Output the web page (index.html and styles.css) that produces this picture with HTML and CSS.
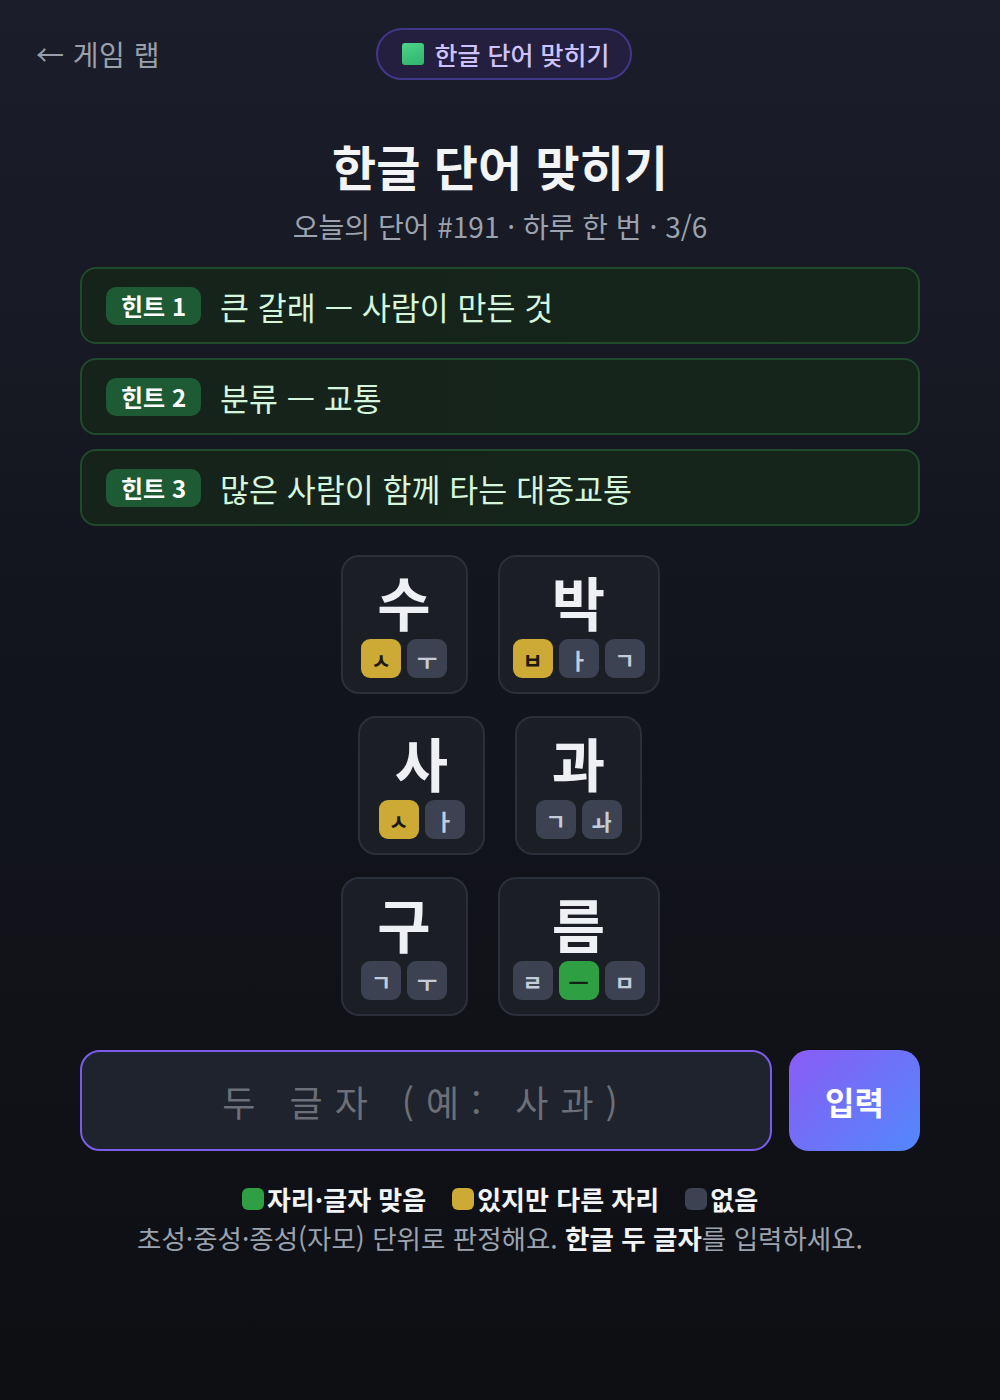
FILE: index.html
```html
<!DOCTYPE html>
<html lang="ko">
<head>
<meta charset="utf-8">
<title>한글 단어 맞히기</title>
<link rel="stylesheet" href="styles.css">
</head>
<body>
<div class="page">
  <header class="topbar">
    <a class="back" href="#">← 게임 랩</a>
    <div class="badge"><span class="sq"></span>한글 단어 맞히기</div>
    <span class="spacer"></span>
  </header>

  <h1 class="title">한글 단어 맞히기</h1>
  <p class="sub">오늘의 단어 #191 · 하루 한 번 · 3/6</p>

  <section class="hints">
    <div class="hint"><span class="tag">힌트 1</span><span class="htext">큰 갈래 — 사람이 만든 것</span></div>
    <div class="hint"><span class="tag">힌트 2</span><span class="htext">분류 — 교통</span></div>
    <div class="hint"><span class="tag">힌트 3</span><span class="htext">많은 사람이 함께 타는 대중교통</span></div>
  </section>

  <section class="board">
    <div class="row">
      <div class="tile"><div class="ch">수</div><div class="jamo"><span class="j y">ㅅ</span><span class="j g">ㅜ</span></div></div>
      <div class="tile"><div class="ch">박</div><div class="jamo"><span class="j y">ㅂ</span><span class="j g">ㅏ</span><span class="j g">ㄱ</span></div></div>
    </div>
    <div class="row">
      <div class="tile"><div class="ch">사</div><div class="jamo"><span class="j y">ㅅ</span><span class="j g">ㅏ</span></div></div>
      <div class="tile"><div class="ch">과</div><div class="jamo"><span class="j g">ㄱ</span><span class="j g">ㅘ</span></div></div>
    </div>
    <div class="row">
      <div class="tile"><div class="ch">구</div><div class="jamo"><span class="j g">ㄱ</span><span class="j g">ㅜ</span></div></div>
      <div class="tile"><div class="ch">름</div><div class="jamo"><span class="j g">ㄹ</span><span class="j gr">ㅡ</span><span class="j g">ㅁ</span></div></div>
    </div>
  </section>

  <form class="entry" onsubmit="return false">
    <input class="field" type="text" placeholder="두 글자 (예: 사과)">
    <button class="go" type="submit">입력</button>
  </form>

  <div class="legend">
    <span class="lg"><span class="dot dgr"></span>자리·글자 맞음</span>
    <span class="lg"><span class="dot dy"></span>있지만 다른 자리</span>
    <span class="lg"><span class="dot dg"></span>없음</span>
  </div>
  <p class="note">초성·중성·종성(자모) 단위로 판정해요. <b>한글 두 글자</b>를 입력하세요.</p>
</div>
</body>
</html>
```

FILE: styles.css
```css
* { box-sizing: border-box; }
html, body { margin: 0; padding: 0; }
body {
  min-height: 1400px;
  background: linear-gradient(180deg, #1b1d2b 0%, #13151d 45%, #0e0f13 100%);
  color: #e5e7eb;
  font-family: "Noto Sans CJK KR", "Noto Sans", sans-serif;
}
.page {
  width: 840px;
  margin: 0 auto;
  padding-top: 28px;
}
.topbar {
  display: flex;
  align-items: center;
  justify-content: space-between;
  margin: 0 -44px;
  height: 52px;
}
.back {
  color: #9aa0ab;
  text-decoration: none;
  font-size: 28px;
  width: 170px;
  letter-spacing: 0.5px;
}
.spacer { width: 162px; }
.badge {
  display: flex;
  align-items: center;
  gap: 10px;
  height: 52px;
  padding: 0 20px 0 24px;
  border-radius: 26px;
  background: #241f3f;
  border: 2px solid #41378a;
  color: #cfc3ff;
  font-size: 25px;
  font-weight: 500;
}
.sq {
  width: 22px; height: 22px;
  border-radius: 3px;
  background: linear-gradient(160deg, #4ed38a, #2fb36a);
}
.title {
  margin: 52px 0 0;
  text-align: center;
  font-size: 48px;
  font-weight: 700;
  color: #f3f4f6;
  line-height: 66px;
}
.sub {
  margin: 10px 0 0;
  text-align: center;
  font-size: 28px;
  color: #9ca3af;
  line-height: 36px;
}
.hints {
  margin-top: 23px;
  display: flex;
  flex-direction: column;
  gap: 14px;
}
.hint {
  height: 77px;
  display: flex;
  align-items: center;
  gap: 19px;
  padding: 0 24px;
  border: 2px solid #1f4a2c;
  border-radius: 16px;
  background: linear-gradient(90deg, #15231b, #16251c);
}
.tag {
  background: #1e5a33;
  color: #ffffff;
  font-weight: 700;
  font-size: 24px;
  height: 38px;
  line-height: 38px;
  padding: 0 15px;
  border-radius: 10px;
}
.htext {
  color: #d5f5dd;
  font-size: 31.5px;
}
.board {
  margin-top: 29px;
  display: flex;
  flex-direction: column;
  align-items: center;
  gap: 22px;
}
.row {
  display: flex;
  gap: 30px;
}
.tile {
  min-width: 127px;
  height: 139px;
  padding: 0 13px;
  border: 2px solid #2b2f3a;
  border-radius: 18px;
  background: #1b1e25;
  display: flex;
  flex-direction: column;
  align-items: center;
}
.ch {
  font-size: 58px;
  font-weight: 700;
  color: #eef0f4;
  line-height: 62px;
  margin-top: 13px;
}
.jamo {
  display: flex;
  gap: 6px;
  margin-top: 7px;
}
.j {
  width: 40px;
  height: 39px;
  border-radius: 9px;
  display: flex;
  align-items: center;
  justify-content: center;
  font-size: 22px;
  font-weight: 700;
}
.y { background: #ccaa35; color: #1c1a12; }
.g { background: #3c4252; color: #c4ccd8; }
.gr { background: #2ea043; color: #0f2415; }
.entry {
  margin-top: 34px;
  display: flex;
  gap: 17px;
}
.field {
  flex: 1;
  height: 101px;
  border: 2px solid #7b5ce8;
  border-radius: 20px;
  background: #1f232d;
  color: #e5e7eb;
  font-family: inherit;
  font-size: 36px;
  text-align: center;
  letter-spacing: 12px;
  outline: none;
}
.field::placeholder { color: #6c6f77; }
.go {
  width: 131px;
  height: 101px;
  border: none;
  border-radius: 20px;
  background: linear-gradient(135deg, #8a5cf6 0%, #5288fb 100%);
  color: #fff;
  font-family: inherit;
  font-size: 32px;
  font-weight: 700;
}
.legend {
  margin-top: 30px;
  display: flex;
  justify-content: center;
  gap: 26px;
  font-size: 26px;
  font-weight: 700;
  color: #f3f4f6;
  line-height: 36px;
}
.lg { display: flex; align-items: center; gap: 3px; }
.dot {
  width: 22px; height: 22px;
  border-radius: 6px;
  display: inline-block;
}
.dgr { background: #2ea043; }
.dy { background: #ccaa35; }
.dg { background: #3c4252; }
.note {
  margin: 2px 0 0;
  text-align: center;
  font-size: 26.5px;
  color: #9ca3af;
  line-height: 38px;
}
.note b { color: #f3f4f6; }
```
